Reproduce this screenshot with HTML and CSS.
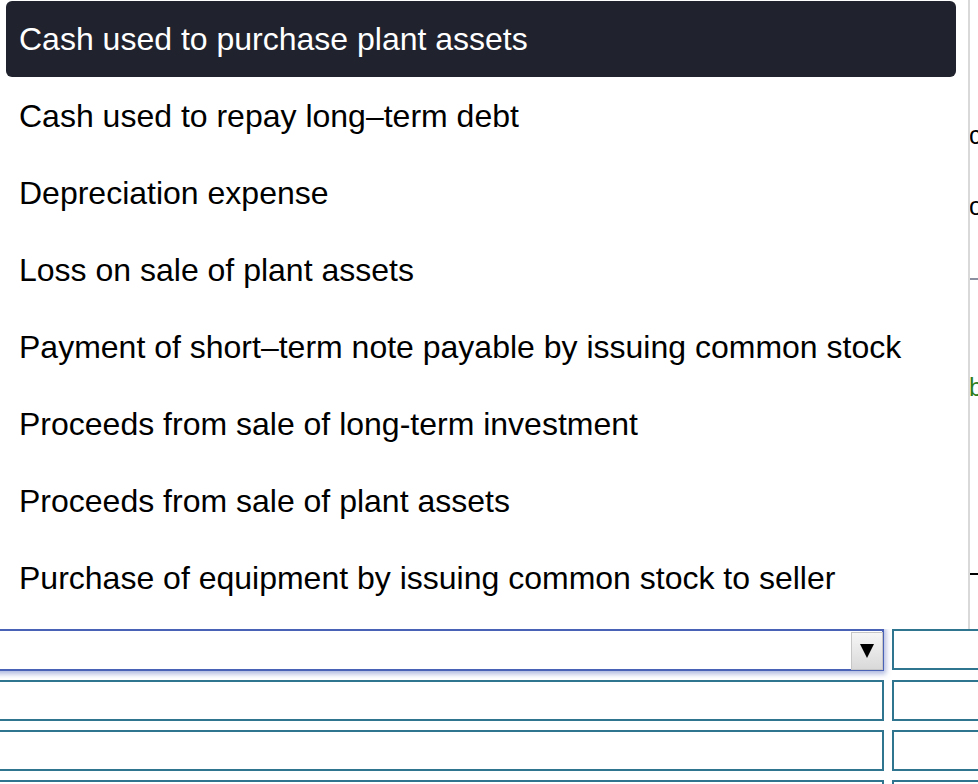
FILE: index.html
```html
<!DOCTYPE html>
<html lang="en">
<head>
<meta charset="utf-8">
<title>Select menu</title>
<link rel="stylesheet" href="styles.css">
</head>
<body>
<div class="page">
  <div class="backdrop">
    <div class="side">
      <div class="side-line first">cash</div>
      <div class="side-line second">operating</div>
      <div class="side-rule"></div>
      <div class="side-line green">by</div>
      <div class="side-total"></div>
    </div>
    <div class="form">
      <div class="row">
        <div class="select focused">
          <div class="select-btn"><span class="tri"></span></div>
        </div>
        <div class="amount"></div>
      </div>
      <div class="row">
        <div class="select"></div>
        <div class="amount"></div>
      </div>
      <div class="row">
        <div class="select"></div>
        <div class="amount"></div>
      </div>
      <div class="row">
        <div class="select"></div>
        <div class="amount"></div>
      </div>
    </div>
  </div>
  <ul class="menu">
    <li class="option active"><span>Cash used to purchase plant assets</span></li>
    <li class="option"><span>Cash used to repay long–term debt</span></li>
    <li class="option"><span>Depreciation expense</span></li>
    <li class="option"><span>Loss on sale of plant assets</span></li>
    <li class="option"><span>Payment of short–term note payable by issuing common stock</span></li>
    <li class="option"><span>Proceeds from sale of long-term investment</span></li>
    <li class="option"><span>Proceeds from sale of plant assets</span></li>
    <li class="option"><span>Purchase of equipment by issuing common stock to seller</span></li>
  </ul>
</div>
</body>
</html>
```

FILE: styles.css
```css
* { box-sizing: border-box; }

html, body {
  margin: 0;
  padding: 0;
  background: #fff;
}

body {
  font-family: "Liberation Sans", Arial, Helvetica, sans-serif;
  color: #000;
  width: 978px;
  height: 784px;
  overflow: hidden;
}

.page {
  position: relative;
  width: 978px;
  height: 784px;
  overflow: hidden;
}

.backdrop {
  display: flex;
  flex-direction: column;
}

.side {
  height: 629px;
  padding-left: 969px;
  overflow: hidden;
  display: flex;
  flex-direction: column;
  align-items: flex-start;
}

.side-line {
  font-size: 25px;
  line-height: 28px;
  height: 28px;
  white-space: nowrap;
}

.side-line.first { margin-top: 121px; }
.side-line.second { margin-top: 43px; }
.side-line.green { margin-top: 93px; color: #2f7d1c; }

.side-rule {
  margin-top: 58px;
  width: 40px;
  height: 2px;
  background: #8a8fa0;
}

.side-total {
  margin-top: 172px;
  width: 40px;
  height: 2px;
  background: #000;
}

.form {
  display: flex;
  flex-direction: column;
  gap: 9px;
}

.row {
  display: flex;
  gap: 8px;
  margin-left: -10px;
}

.select {
  width: 894px;
  height: 41px;
  border: 2px solid #2f7590;
  background: #fff;
  flex: none;
}

.select.focused {
  border-color: #4a62b6;
  box-shadow: 0 1px 5px 2px rgba(74, 98, 182, 0.45);
  display: flex;
  justify-content: flex-end;
  padding-top: 1px;
  height: 42px;
}

.select-btn {
  width: 32px;
  height: 38px;
  margin-right: -1px;
  background: linear-gradient(#f6f6f6, #d9d9d9);
  border: 1px solid #c6c6c6;
  display: flex;
  align-items: center;
  justify-content: center;
}

.tri {
  width: 0;
  height: 0;
  border-left: 7px solid transparent;
  border-right: 7px solid transparent;
  border-top: 14px solid #000;
}

.amount {
  width: 120px;
  height: 41px;
  border: 2px solid #2f7590;
  flex: none;
}

.menu {
  position: absolute;
  top: 0;
  left: 0;
  z-index: 10;
  width: 970px;
  height: 629px;
  margin: 0;
  padding: 0;
  list-style: none;
  background: #fff;
  border-right: 2px solid #d9d9d9;
}

.option {
  height: 77px;
  padding: 1px 12px 0 6px;
  display: flex;
}

.option span {
  display: flex;
  align-items: center;
  width: 100%;
  padding-left: 13px;
  font-size: 32px;
  white-space: nowrap;
  color: #000;
  border-radius: 6px;
}

.option.active span {
  background: #20232d;
  color: #fff;
}
```
